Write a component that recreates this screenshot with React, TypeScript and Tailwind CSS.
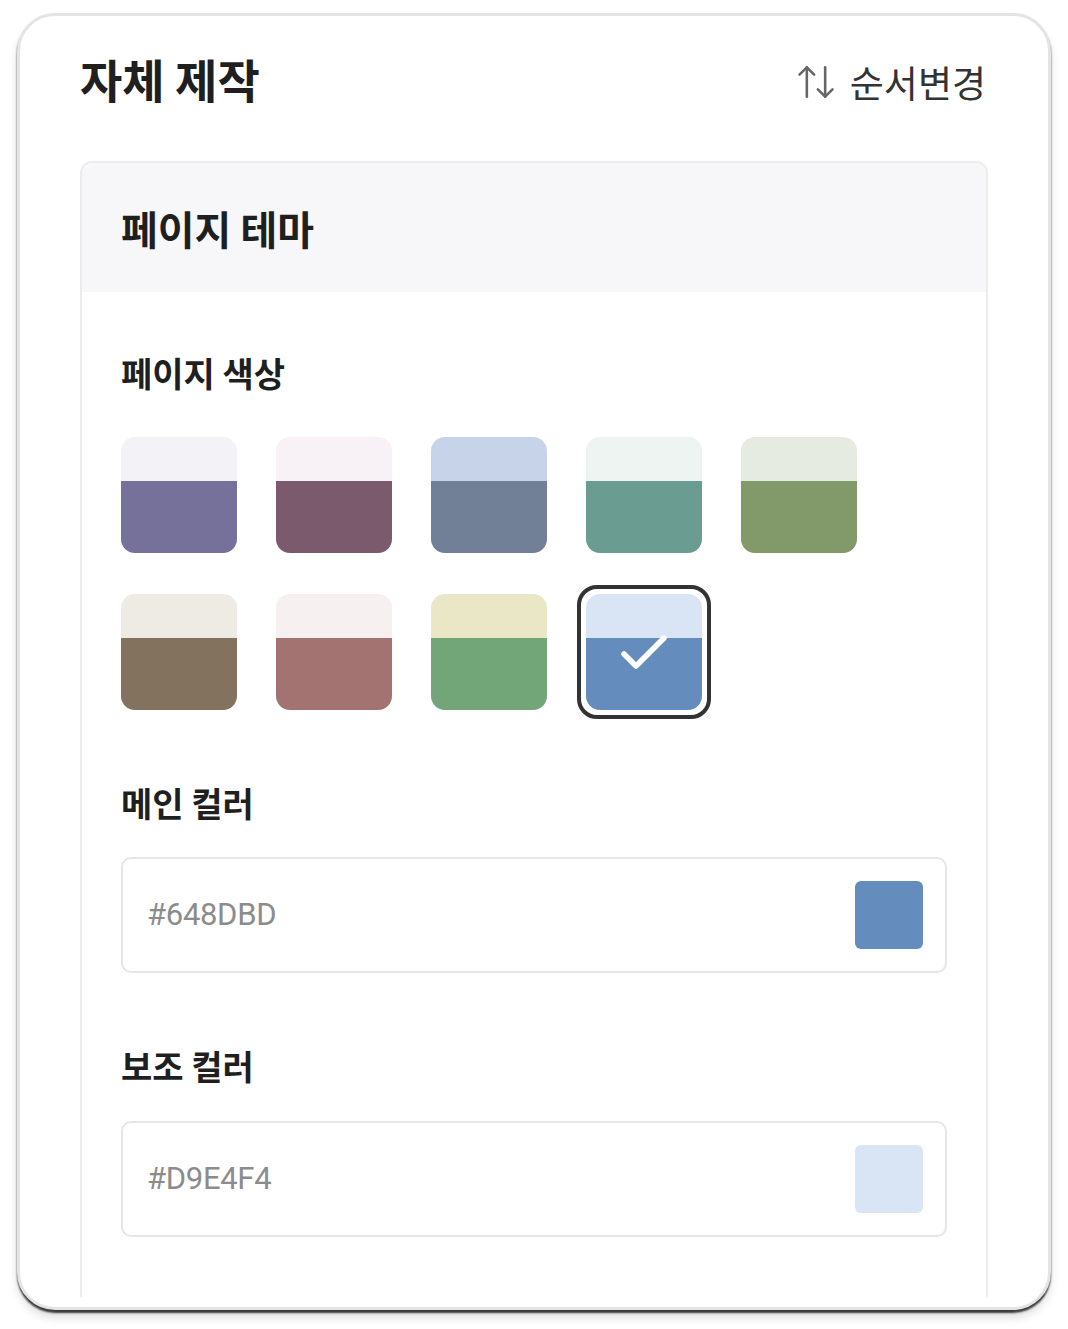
import React from "react";
import { ArrowUpDown } from "lucide-react";

const swatches = [
  { top: "#f2f2f7", bottom: "#75719a" },
  { top: "#f8f1f5", bottom: "#7a5a6c" },
  { top: "#c7d3e8", bottom: "#718096" },
  { top: "#eef4f2", bottom: "#6b9c92" },
  { top: "#e6ebe1", bottom: "#82996a" },
  { top: "#eeebe5", bottom: "#83735e" },
  { top: "#f7f0f0", bottom: "#a37372" },
  { top: "#e9e7c6", bottom: "#72a577" },
  { top: "#d9e4f4", bottom: "#648dbd", selected: true },
];

function Swatch({ top, bottom, selected }: { top: string; bottom: string; selected?: boolean }) {
  return (
    <div className="relative w-[116px] h-[116px]">
      {selected && (
        <div className="absolute -inset-[9px] rounded-[20px] border-[4px] border-[#333333]" />
      )}
      <div className="relative w-full h-full rounded-[14px] overflow-hidden flex flex-col">
        <div className="h-[44px]" style={{ backgroundColor: top }} />
        <div className="flex-1" style={{ backgroundColor: bottom }} />
        {selected && (
          <svg className="absolute inset-0" width="116" height="116" viewBox="0 0 116 116">
            <polyline
              points="38,60 50,72 78,44"
              fill="none"
              stroke="#ffffff"
              strokeWidth="5.5"
              strokeLinecap="round"
              strokeLinejoin="round"
            />
          </svg>
        )}
      </div>
    </div>
  );
}

function ColorInput({ value, color }: { value: string; color: string }) {
  return (
    <div className="h-[116px] rounded-[10px] border-2 border-[#e6e6e6] flex items-center justify-between pl-[24px] pr-[22px]">
      <span className="text-[31px] text-[#8c8c8c] font-['Roboto','Noto_Sans_CJK_KR',sans-serif] tracking-[-0.01em]">
        {value}
      </span>
      <div className="w-[68px] h-[68px] rounded-[6px]" style={{ backgroundColor: color }} />
    </div>
  );
}

export default function App() {
  return (
    <div className="bg-white min-h-[1329px] pt-[13px] px-[17px] font-['Noto_Sans_CJK_KR','Noto_Sans',sans-serif]">
      <div className="w-[1034px] h-[1297px] rounded-[38px] border-[3px] border-[#e4e4e4] bg-white shadow-[0_3px_2px_rgba(0,0,0,0.75),0_8px_10px_rgba(0,0,0,0.12)] overflow-hidden flex flex-col pb-[10px]">
        <div className="flex-1 overflow-hidden px-[60px] pt-[36px]">
          <div className="flex items-end justify-between">
            <h1 className="text-[46px] leading-[52px] font-bold text-[#1f1f1f]">자체 제작</h1>
            <div className="flex items-center gap-[12px] pr-[2px]">
              <ArrowUpDown size={44} strokeWidth={1.4} color="#666666" />
              <span className="text-[37px] leading-[40px] text-[#333333]">순서변경</span>
            </div>
          </div>

          <div className="mt-[57px] rounded-t-[12px] border-2 border-b-0 border-[#ececec] h-[1200px]">
            <div className="h-[129px] bg-[#f7f7f9] rounded-t-[10px] flex items-center px-[39px]">
              <h2 className="text-[40px] leading-[46px] font-bold text-[#1f1f1f]">페이지 테마</h2>
            </div>
            <div className="px-[39px] pt-[61px]">
              <h3 className="text-[34px] leading-[40px] font-bold text-[#1f1f1f]">페이지 색상</h3>
              <div className="mt-[44px] grid grid-cols-[repeat(5,116px)] gap-x-[39px] gap-y-[41px]">
                {swatches.map((s, i) => (
                  <Swatch key={i} top={s.top} bottom={s.bottom} selected={s.selected} />
                ))}
              </div>

              <h3 className="mt-[73px] text-[34px] leading-[40px] font-bold text-[#1f1f1f]">메인 컬러</h3>
              <div className="mt-[34px]">
                <ColorInput value="#648DBD" color="#648dbd" />
              </div>

              <h3 className="mt-[73px] text-[34px] leading-[40px] font-bold text-[#1f1f1f]">보조 컬러</h3>
              <div className="mt-[35px]">
                <ColorInput value="#D9E4F4" color="#d9e4f4" />
              </div>
            </div>
          </div>
        </div>
      </div>
    </div>
  );
}
